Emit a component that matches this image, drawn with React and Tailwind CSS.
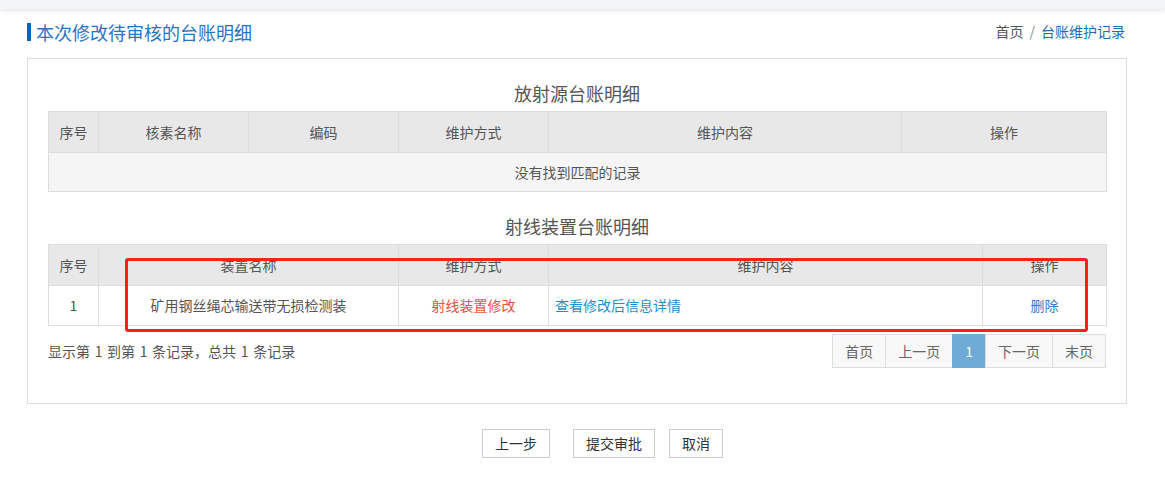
import React from "react";

const FONT = { fontFamily: '"Noto Sans CJK SC", "Noto Sans", sans-serif' };

function Th({ w, children }) {
  return (
    <th
      className="border border-[#dddddd] bg-[#e8e8e8] h-[41px] p-0 text-center font-normal text-[14px] text-[#555555]"
      style={{ width: w }}
    >
      {children}
    </th>
  );
}

function Td({ className = "text-[#555555]", children }) {
  return (
    <td className={"border border-[#dddddd] h-[40px] p-0 text-[14px] " + className}>
      {children}
    </td>
  );
}

function PageBtn({ children, active, first }) {
  return (
    <div
      className={
        "h-[34px] px-3 flex items-center justify-center border text-[14px] " +
        (first ? "" : "-ml-px ") +
        (active
          ? "bg-[#6eabd6] border-[#6eabd6] text-white"
          : "bg-[#f8f8f8] border-[#dddddd] text-[#666666]")
      }
    >
      {children}
    </div>
  );
}

function Btn({ children, className = "" }) {
  return (
    <div
      className={
        "h-[29px] px-3 flex items-center justify-center border border-[#cccccc] bg-white text-[14px] text-[#333333] " +
        className
      }
    >
      {children}
    </div>
  );
}

export default function App() {
  return (
    <div className="relative w-[1165px] h-[485px] bg-white overflow-hidden" style={FONT}>
      {/* top shadow */}
      <div className="h-[9px] bg-[#f4f5f6] shadow-[0_2px_5px_rgba(0,0,0,0.10)]" />

      {/* header */}
      <div className="ml-[27px] w-[1100px] mt-[12px] flex items-center justify-between">
        <div className="flex items-center border-l-[4px] border-[#0d63b5] h-[18px] pl-[5px]">
          <span className="text-[18px] leading-[22px] text-[#2a74bd]">本次修改待审核的台账明细</span>
        </div>
        <div className="text-[14px] pr-[2px] flex items-center">
          <span className="text-[#555555]">首页</span>
          <span className="text-[#888888] px-[6px]">/</span>
          <span className="text-[#1a6dbb]">台账维护记录</span>
        </div>
      </div>

      {/* panel */}
      <div className="ml-[27px] w-[1100px] mt-[16px] border border-[#dddddd] px-[20px] pt-[19px] pb-[35px]">
        <div className="h-[30px] leading-[30px] text-center text-[18px] text-[#555555] mb-[3px]">
          放射源台账明细
        </div>
        <table className="w-[1058px] border-collapse table-fixed">
          <thead>
            <tr>
              <Th w={50}>序号</Th>
              <Th w={150}>核素名称</Th>
              <Th w={150}>编码</Th>
              <Th w={150}>维护方式</Th>
              <Th w={353}>维护内容</Th>
              <Th w={205}>操作</Th>
            </tr>
          </thead>
          <tbody>
            <tr>
              <td
                colSpan={6}
                className="border border-[#dddddd] bg-[#f5f5f5] h-[39px] p-0 text-center text-[14px] text-[#555555]"
              >
                没有找到匹配的记录
              </td>
            </tr>
          </tbody>
        </table>

        <div className="mt-[19px] h-[30px] leading-[30px] text-center text-[18px] text-[#555555] mb-[3px]">
          射线装置台账明细
        </div>
        <table className="w-[1058px] border-collapse table-fixed">
          <thead>
            <tr>
              <Th w={50}>序号</Th>
              <Th w={300}>装置名称</Th>
              <Th w={150}>维护方式</Th>
              <Th w={434}>维护内容</Th>
              <Th w={124}>操作</Th>
            </tr>
          </thead>
          <tbody>
            <tr>
              <Td className="text-center text-[#555555]">1</Td>
              <Td className="text-center text-[#555555]">矿用钢丝绳芯输送带无损检测装</Td>
              <Td className="text-center text-[#e8523e]">射线装置修改</Td>
              <Td className="pl-[6px] text-[#1d8fce]">查看修改后信息详情</Td>
              <Td className="text-center text-[#3a78bf]">删除</Td>
            </tr>
          </tbody>
        </table>

        <div className="mt-[8px] flex items-center justify-between">
          <div className="text-[14px] text-[#555555] [word-spacing:1.5px]">显示第 1 到第 1 条记录，总共 1 条记录</div>
          <div className="flex">
            <PageBtn first>首页</PageBtn>
            <PageBtn>上一页</PageBtn>
            <PageBtn active>1</PageBtn>
            <PageBtn>下一页</PageBtn>
            <PageBtn>末页</PageBtn>
          </div>
        </div>
      </div>

      {/* buttons */}
      <div className="mt-[25px] flex justify-center pl-[40px]">
        <Btn className="mr-[23px]">上一步</Btn>
        <Btn className="mr-[14px]">提交审批</Btn>
        <Btn>取消</Btn>
      </div>

      {/* red annotation box */}
      <div className="absolute left-[125px] top-[258px] w-[963px] h-[74px] border-[3px] border-[#ff1f1f] rounded-[3px] pointer-events-none" />
    </div>
  );
}
